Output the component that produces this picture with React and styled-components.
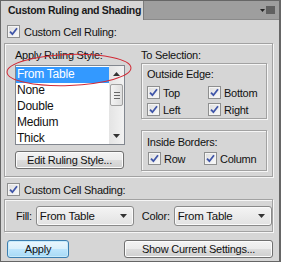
import styled, { createGlobalStyle } from "styled-components";

const GlobalStyle = createGlobalStyle`
  html, body { margin: 0; padding: 0; background: #d6d6d6; }
  body {
    font-family: "Liberation Sans", Arial, sans-serif;
    font-size: 11px;
    letter-spacing: -0.25px;
    color: #111;
  }
`;

const Panel = styled.div`
  position: relative;
  width: 281px;
  height: 262px;
  box-sizing: border-box;
  border: 1px solid #666;
  border-right-width: 2px;
  background: #d6d6d6;
  display: flex;
  flex-direction: column;
`;

const TitleBar = styled.div`
  height: 18px;
  background: #9e9e9e;
  display: flex;
  justify-content: space-between;
  align-items: stretch;
  border-bottom: 1px solid #8a8a8a;
`;

const Tab = styled.div`
  width: 143px;
  margin-bottom: -1px;
  background: #d6d6d6;
  border-right: 1px solid #7c7c7c;
  font-size: 10.5px;
  font-weight: bold;
  letter-spacing: -0.3px;
  line-height: 19px;
  padding-left: 7px;
  box-sizing: border-box;
  color: #1a1a1a;
`;

const MenuIcon = styled.svg`
  margin: 5px 4px 0 0;
`;

const Body = styled.div`
  padding: 5px 6px 0 3px;
  display: flex;
  flex-direction: column;
`;

const CheckRow = styled.label`
  display: flex;
  align-items: center;
  gap: ${(p) => p.$gap || 4}px;
  height: 13px;
  margin-left: ${(p) => p.$indent || 0}px;
  margin-top: ${(p) => p.$top || 0}px;
  white-space: nowrap;
`;

const Box = styled.span`
  width: 13px;
  height: 13px;
  box-sizing: border-box;
  border: 1px solid #8e8f8f;
  background: linear-gradient(135deg, #dcdcdc, #fbfbfb);
  box-shadow: inset 0 0 0 1px #f4f4f4;
  display: flex;
  align-items: center;
  justify-content: center;
  flex: none;
`;

const Etched = styled.div`
  border: 1px solid #a2a2a2;
  box-shadow: inset 1px 1px 0 #f6f6f6, 1px 1px 0 #f6f6f6;
  margin-top: ${(p) => p.$top || 0}px;
`;

const RulingGroup = styled(Etched)`
  height: 134px;
  box-sizing: border-box;
  padding: 5px 6px 0 10px;
  display: grid;
  grid-template-columns: 110px 126px;
  column-gap: 16px;
  align-items: start;
`;

const Column = styled.div`
  display: flex;
  flex-direction: column;
`;

const Caption = styled.div`
  height: ${(p) => p.$h || 13}px;
  line-height: 13px;
  white-space: nowrap;
`;

const ListBox = styled.div`
  margin-top: 2px;
  height: 80px;
  box-sizing: border-box;
  border: 1px solid #82878f;
  background: #fff;
  display: flex;
  overflow: hidden;
`;

const Items = styled.div`
  flex: 1;
  display: flex;
  flex-direction: column;
  padding-top: 1px;
`;

const Item = styled.div`
  height: 16px;
  line-height: 15px;
  padding-left: 1px;
  font-size: 12px;
  flex: none;
  background: ${(p) => (p.$selected ? "#3399ff" : "transparent")};
  color: ${(p) => (p.$selected ? "#fff" : "#111")};
`;

const ScrollBar = styled.div`
  width: 15px;
  background: linear-gradient(90deg, #e4e4e4, #f2f2f2);
  display: flex;
  flex-direction: column;
  align-items: center;
`;

const Arrow = styled.div`
  height: 16px;
  display: flex;
  align-items: center;
  justify-content: center;
  margin-top: ${(p) => (p.$bottom ? "auto" : "0")};
`;

const Thumb = styled.div`
  width: 13px;
  height: 22px;
  box-sizing: border-box;
  border: 1px solid #a0a0a0;
  border-radius: 2px;
  background: linear-gradient(90deg, #f3f3f3, #dedede);
  display: flex;
  flex-direction: column;
  align-items: center;
  justify-content: center;
  gap: 2px;
  margin-top: 2px;
`;

const Grip = styled.span`
  width: 6px;
  height: 1px;
  background: #666;
`;

const Button = styled.button`
  height: 18px;
  width: ${(p) => p.$w}px;
  box-sizing: border-box;
  padding: 0;
  border: 1px solid ${(p) => (p.$default ? "#3c7fb1" : "#707070")};
  border-radius: 3px;
  background: ${(p) =>
    p.$default
      ? "linear-gradient(#eaf6fd 0%, #d9f0fc 50%, #bee6fd 51%, #a7d9f5 100%)"
      : "linear-gradient(#f3f3f3 0%, #ebebeb 50%, #dddddd 51%, #cfcfcf 100%)"};
  box-shadow: inset 0 0 0 1px ${(p) => (p.$default ? "#c8ebfb" : "#fcfcfc")};
  font-family: inherit;
  font-size: 11px;
  letter-spacing: -0.25px;
  color: #111;
  margin-top: ${(p) => p.$top || 0}px;
`;

const SubBox = styled(Etched)`
  height: ${(p) => p.$h}px;
  box-sizing: border-box;
  padding: ${(p) => p.$pad};
  display: flex;
  flex-direction: column;
`;

const CheckGrid = styled.div`
  display: grid;
  grid-template-columns: ${(p) => p.$first}px auto;
  row-gap: 4px;
  margin-top: ${(p) => p.$top}px;
  padding-left: ${(p) => p.$left}px;
`;

const ShadingGroup = styled(Etched)`
  height: 33px;
  box-sizing: border-box;
  padding: 0 0 0 11px;
  display: flex;
  align-items: center;
  margin-top: 3px;
`;

const FieldLabel = styled.span`
  margin-right: 4px;
  margin-left: ${(p) => p.$left || 0}px;
  margin-top: 1px;
`;

const Select = styled.div`
  width: 98px;
  height: 20px;
  box-sizing: border-box;
  border: 1px solid #8a8a8a;
  border-radius: 3px;
  background: linear-gradient(#f4f4f4, #e2e2e2);
  box-shadow: inset 0 0 0 1px #fafafa;
  display: flex;
  align-items: center;
  justify-content: space-between;
  padding: 0 6px 0 3px;
  font-size: 11.5px;
  margin-top: 1px;
`;

const ButtonRow = styled.div`
  display: flex;
  justify-content: space-between;
  margin: 8px 0 0 3px;
`;

const Annotation = styled.svg`
  position: absolute;
  left: 0;
  top: 0;
  pointer-events: none;
`;

const Tick = () => (
  <svg width="9" height="9" viewBox="0 0 9 9">
    <path d="M1 4.6 L3.4 7.2 L8 1.2" fill="none" stroke="#3f55a8" strokeWidth="1.8" />
  </svg>
);

const Check = ({ children, ...rest }) => (
  <CheckRow {...rest}>
    <Box>
      <Tick />
    </Box>
    <span>{children}</span>
  </CheckRow>
);

const Triangle = ({ up }) => (
  <svg width="7" height="4" viewBox="0 0 7 4">
    <path d={up ? "M0 4 L3.5 0 L7 4 Z" : "M0 0 L7 0 L3.5 4 Z"} fill="#333" />
  </svg>
);

const styles = ["From Table", "None", "Double", "Medium", "Thick"];

export default function App() {
  return (
    <>
      <GlobalStyle />
      <Panel>
        <TitleBar>
          <Tab>Custom Ruling and Shading</Tab>
          <MenuIcon width="15" height="9" viewBox="0 0 15 9">
            <path d="M0 3 L5 3 L2.5 6 Z" fill="#222" />
            <rect x="6" y="0.5" width="9" height="1" fill="#222" />
            <rect x="6" y="2.5" width="9" height="1" fill="#222" />
            <rect x="6" y="4.5" width="9" height="1" fill="#222" />
            <rect x="6" y="6.5" width="9" height="1" fill="#222" />
          </MenuIcon>
        </TitleBar>
        <Body>
          <Check $indent={3}>Custom Cell Ruling:</Check>
          <RulingGroup $top={5}>
            <Column>
              <Caption $h={14}>Apply Ruling Style:</Caption>
              <ListBox>
                <Items>
                  {styles.map((s, i) => (
                    <Item key={s} $selected={i === 0}>
                      {s}
                    </Item>
                  ))}
                </Items>
                <ScrollBar>
                  <Arrow>
                    <Triangle up />
                  </Arrow>
                  <Thumb>
                    <Grip />
                    <Grip />
                    <Grip />
                  </Thumb>
                  <Arrow $bottom>
                    <Triangle />
                  </Arrow>
                </ScrollBar>
              </ListBox>
              <Button $w={109} $top={6}>Edit Ruling Style...</Button>
            </Column>
            <Column>
              <Caption>To Selection:</Caption>
              <SubBox $h={56} $pad="4px 0 0 5px" $top={1}>
                <Caption>Outside Edge:</Caption>
                <CheckGrid $first={61} $top={5} $left={0}>
                  <Check $gap={3}>Top</Check>
                  <Check $gap={3}>Bottom</Check>
                  <Check $gap={3}>Left</Check>
                  <Check $gap={3}>Right</Check>
                </CheckGrid>
              </SubBox>
              <SubBox $h={41} $pad="5px 0 0 5px" $top={11}>
                <Caption>Inside Borders:</Caption>
                <CheckGrid $first={56} $top={3} $left={1}>
                  <Check $gap={3}>Row</Check>
                  <Check $gap={3}>Column</Check>
                </CheckGrid>
              </SubBox>
            </Column>
          </RulingGroup>
          <Check $indent={3} $top={6}>Custom Cell Shading:</Check>
          <ShadingGroup>
            <FieldLabel>Fill:</FieldLabel>
            <Select>
              <span>From Table</span>
              <Triangle />
            </Select>
            <FieldLabel $left={8}>Color:</FieldLabel>
            <Select>
              <span>From Table</span>
              <Triangle />
            </Select>
          </ShadingGroup>
          <ButtonRow>
            <Button $w={62} $default>Apply</Button>
            <Button $w={149}>Show Current Settings...</Button>
          </ButtonRow>
        </Body>
        <Annotation width="281" height="262">
          <ellipse
            cx="68"
            cy="69"
            rx="62"
            ry="15.5"
            transform="rotate(-2 68 69)"
            fill="none"
            stroke="#d12a36"
            strokeWidth="1"
          />
        </Annotation>
      </Panel>
    </>
  );
}
